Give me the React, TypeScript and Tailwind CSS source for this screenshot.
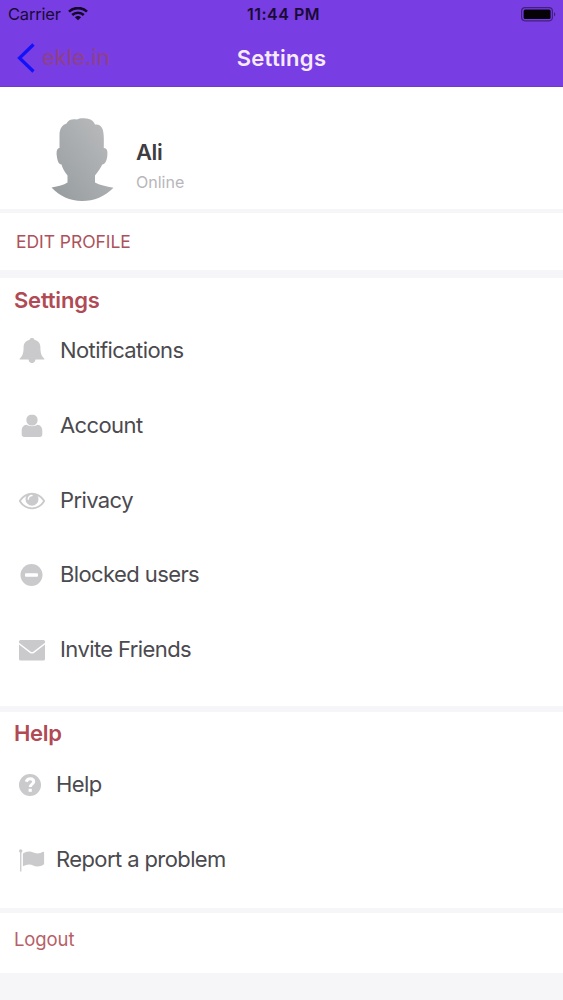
import type { ReactNode } from "react";

function BellIcon() {
  return (
    <svg width="26" height="26" viewBox="0 0 26 26" fill="#cacacc">
      <path d="M13 0c-1.400 0-2.200.7-2.400 1.700C7 2.500 4.600 5.300 4.600 9.200c0 5.600-.9 8.800-3.800 11.200-.5.500-.2 1.200.5 1.200h8.200c.2 2 1.600 3.600 3.500 3.600s3.300-1.600 3.500-3.600h8.200c.7 0 1-.7.500-1.200-2.900-2.400-3.800-5.600-3.800-11.200 0-3.900-2.400-6.700-6-7.500C15.200.7 14.400 0 13 0z" />
    </svg>
  );
}

function PersonIcon() {
  return (
    <svg width="26" height="26" viewBox="0 0 26 26" fill="#cacacc">
      <path d="M13 1.700c-3.700 0-5.600 2-5.600 5.300 0 3.100 2.300 5.600 5.600 5.600s5.600-2.500 5.600-5.600c0-3.300-1.900-5.300-5.600-5.300z" />
      <path d="M7.600 11.800C4.300 12.100 2.700 14.500 2.700 18v3.200c0 1.700.9 2.700 2.600 2.700h15.400c1.700 0 2.600-1 2.600-2.700V18c0-3.500-1.600-5.900-4.900-6.200C16.800 13.700 9.200 13.700 7.600 11.800z" />
    </svg>
  );
}

function EyeIcon() {
  return (
    <svg width="26" height="26" viewBox="0 64 1792 1792" fill="#cacacc">
      <path d="M1664 960q-152-236-381-353 61 104 61 225 0 185-131.500 316.500t-316.500 131.500-316.500-131.500-131.500-316.500q0-121 61-225-229 117-381 353 133 205 333.500 326.500t434.500 121.500 434.500-121.500 333.500-326.500zm-720-384q0-20-14-34t-34-14q-125 0-214.500 89.500t-89.500 214.500q0 20 14 34t34 14 34-14 14-34q0-86 61-147t147-61q20 0 34-14t14-34zm848 384q0 34-20 69-140 230-376.500 368.500t-499.500 138.500-499.500-139-376.500-368q-20-35-20-69t20-69q140-229 376.500-368t499.500-139 499.500 139 376.500 368q20 35 20 69z" />
    </svg>
  );
}

function MinusIcon() {
  return (
    <svg width="26" height="26" viewBox="0 0 26 26">
      <circle cx="12.500" cy="13" r="11" fill="#cacacc" />
      <rect x="6" y="11.300" width="13" height="3.400" rx="1" fill="#fff" />
    </svg>
  );
}

function MailIcon() {
  return (
    <svg width="26" height="26" viewBox="0 0 26 26" fill="#cacacc">
      <path d="M0 4.500Q0 3 1.500 3h23Q26 3 26 4.500v1.200L14.500 14.500q-1.500 1.100-3 0L0 5.700z" />
      <path d="M0 7.500 11 15.900q2 1.400 4 0L26 7.500V22q0 1.500-1.500 1.500h-23Q0 23.500 0 22z" />
    </svg>
  );
}

function QuestionIcon() {
  return (
    <svg width="26" height="26" viewBox="0 0 26 26">
      <circle cx="11" cy="13" r="11" fill="#cacacc" />
      <path d="M7.300 9.800C8 7.500 9.400 6.800 11.200 6.800c2 0 3.500 1.200 3.500 3 0 2.300-3.500 2.400-3.500 5.200" fill="none" stroke="#fff" strokeWidth="3" />
      <rect x="9.600" y="16.800" width="3.200" height="3" fill="#fff" />
    </svg>
  );
}

function FlagIcon() {
  return (
    <svg width="26" height="26" viewBox="0 0 26 26" fill="#cacacc">
      <circle cx="1.700" cy="4" r="1.700" />
      <path d="M1.100 4h1.300v20.500H1.100zM4 6.600c1.800-1.100 3.900-2 6.100-2 3.400 0 4.900 1.900 8.200 1.900 2.200 0 4.200-.9 5.900-1.700.5-.2.900.1.900.6v11.300c0 .5-.3.800-.7 1-1.700.9-3.700 1.700-6 1.700-3.400 0-5-2-8.500-2-2 0-3.700.8-5.300 1.700-.4.200-.7 0-.7-.4V7.300c0-.3.100-.5.100-.7z" />
    </svg>
  );
}

function Row({ icon, gap, children }: { icon: ReactNode; gap: string; children: ReactNode }) {
  return (
    <div className={`flex h-[74.700px] items-center text-[22px] leading-7 tracking-[-0.6px] text-[#4b4a4f] ${gap}`}>
      <span className="shrink-0 pt-[2px]">{icon}</span>
      {children}
    </div>
  );
}

export default function App() {
  return (
    <div className="flex h-[1000px] w-[563px] flex-col overflow-hidden bg-[#f6f5f8] font-['Inter','Liberation_Sans',sans-serif]">
      <header className="h-[87px] shrink-0 border-b border-[#6c3bd0] bg-[#783de3]">
        <div className="grid h-7 grid-cols-3 items-center text-[#190b35]">
          <div className="flex items-center gap-[7px] pl-2 text-[16.500px]">
            <span className="tracking-[-0.2px]">Carrier</span>
            <svg width="20" height="14" viewBox="0 0 20 14" fill="none" stroke="#130827" strokeWidth="2.600">
              <path d="M1 4.600C6-.1 14-.1 19 4.600M4.200 8c3.300-3.100 8.300-3.100 11.600 0" />
              <path d="M10 13.300 6.900 10.300c1.800-1.600 4.400-1.600 6.200 0z" fill="#130827" stroke="none" />
            </svg>
          </div>
          <div className="pl-1 text-center text-[16px] font-semibold tracking-[0.500px]">11:44 PM</div>
          <div className="flex justify-end pr-[7px]">
            <svg width="35" height="15" viewBox="0 0 35 15">
              <rect x=".6" y=".6" width="30.800" height="13.200" rx="3.500" fill="none" stroke="#422080" strokeWidth="1.200" />
              <rect x="2.600" y="2.500" width="27" height="9.500" rx="1.500" fill="#050208" />
              <path d="M33 5v4.500c1.800-.8 1.800-3.700 0-4.500" fill="#422080" />
            </svg>
          </div>
        </div>
        <div className="grid h-[59px] grid-cols-3 items-center">
          <div className="flex items-center gap-[7px] pl-[17px]">
            <svg width="18" height="30" viewBox="0 0 18 30" fill="none" stroke="#1212fa" strokeWidth="3.200">
              <path d="M16.500 1.500 2.500 15l14 13.500" />
            </svg>
            <span className="text-[22px] font-medium tracking-[-0.2px] text-[#8b4190]">ekle.in</span>
          </div>
          <h1 className="pt-px text-center text-[22px] font-semibold tracking-[0.300px] text-[#f7eaff]">Settings</h1>
        </div>
      </header>

      <section className="flex h-[122px] shrink-0 bg-white pl-[51px] pt-[31px]">
        <svg width="63" height="84" viewBox="0 0 63 84">
          <defs>
            <linearGradient id="shade" x1="0" y1="1" x2="1" y2="0">
              <stop offset="0" stopColor="#959b9d" />
              <stop offset="1" stopColor="#bcbdbf" />
            </linearGradient>
          </defs>
          <path fill="url(#shade)" d="M8.500 30V17C8.500 11 11 7 15.500 5.500 17 2 21 .5 26 1.500 28 0 34 0 37 .8 40.500 1.500 43 3.500 44 6.500 48 6 50.500 8 51.500 11c1.500 4 1.500 10 1.300 19 3.700.5 4 3.500 3.500 8-.5 5-2.300 8-5 8.500C49.500 50 47 54 44 57.500v7c4.500 2.500 11 4 18.500 5.200C54 78.500 43 83 31 83S8.500 78 .5 69.500c7-1.200 12-2.500 16-5v-7C13.500 54 11.500 50 10.500 46.500 7.500 46 6.500 43 5.800 38c-.5-4.500 0-7.500 2.700-8z" />
        </svg>
        <div className="ml-[22px] pt-5">
          <div className="text-[22px] font-semibold leading-7 tracking-[-0.400px] text-[#3f3d42]">Ali</div>
          <div className="mt-1 text-[16px] leading-6 text-[#b7b6bb]">Online</div>
        </div>
      </section>

      <button className="mt-1 flex h-[57px] shrink-0 items-center bg-white pl-4 pt-[2px] text-[17.500px] tracking-[-0.050px] text-[#ad525b]">EDIT PROFILE</button>

      <section className="mt-2 h-[428px] shrink-0 bg-white">
        <h2 className="h-[35px] pl-[14px] pt-2 text-[22px] font-semibold leading-7 tracking-[-0.200px] text-[#b04a54]">Settings</h2>
        <div className="pl-[19px]">
          <Row gap="gap-[15px]" icon={<BellIcon />}>Notifications</Row>
          <Row gap="gap-[15px]" icon={<PersonIcon />}>Account</Row>
          <Row gap="gap-[15px]" icon={<EyeIcon />}>Privacy</Row>
          <Row gap="gap-[15px]" icon={<MinusIcon />}>Blocked users</Row>
          <Row gap="gap-[15px]" icon={<MailIcon />}>Invite Friends</Row>
        </div>
      </section>

      <section className="mt-[6px] h-[196px] shrink-0 bg-white">
        <h2 className="h-[35px] pl-[14px] pt-[7px] text-[22px] font-semibold leading-7 tracking-[-0.300px] text-[#b04a54]">Help</h2>
        <div className="pl-[19px]">
          <Row gap="gap-[11px]" icon={<QuestionIcon />}>Help</Row>
          <Row gap="gap-[11px]" icon={<FlagIcon />}>Report a problem</Row>
        </div>
      </section>

      <button className="mt-[5px] flex h-[60px] shrink-0 items-center bg-white pb-[6px] pl-[14px] text-[18.500px] tracking-[-0.100px] text-[#b75f68]">Logout</button>
    </div>
  );
}
